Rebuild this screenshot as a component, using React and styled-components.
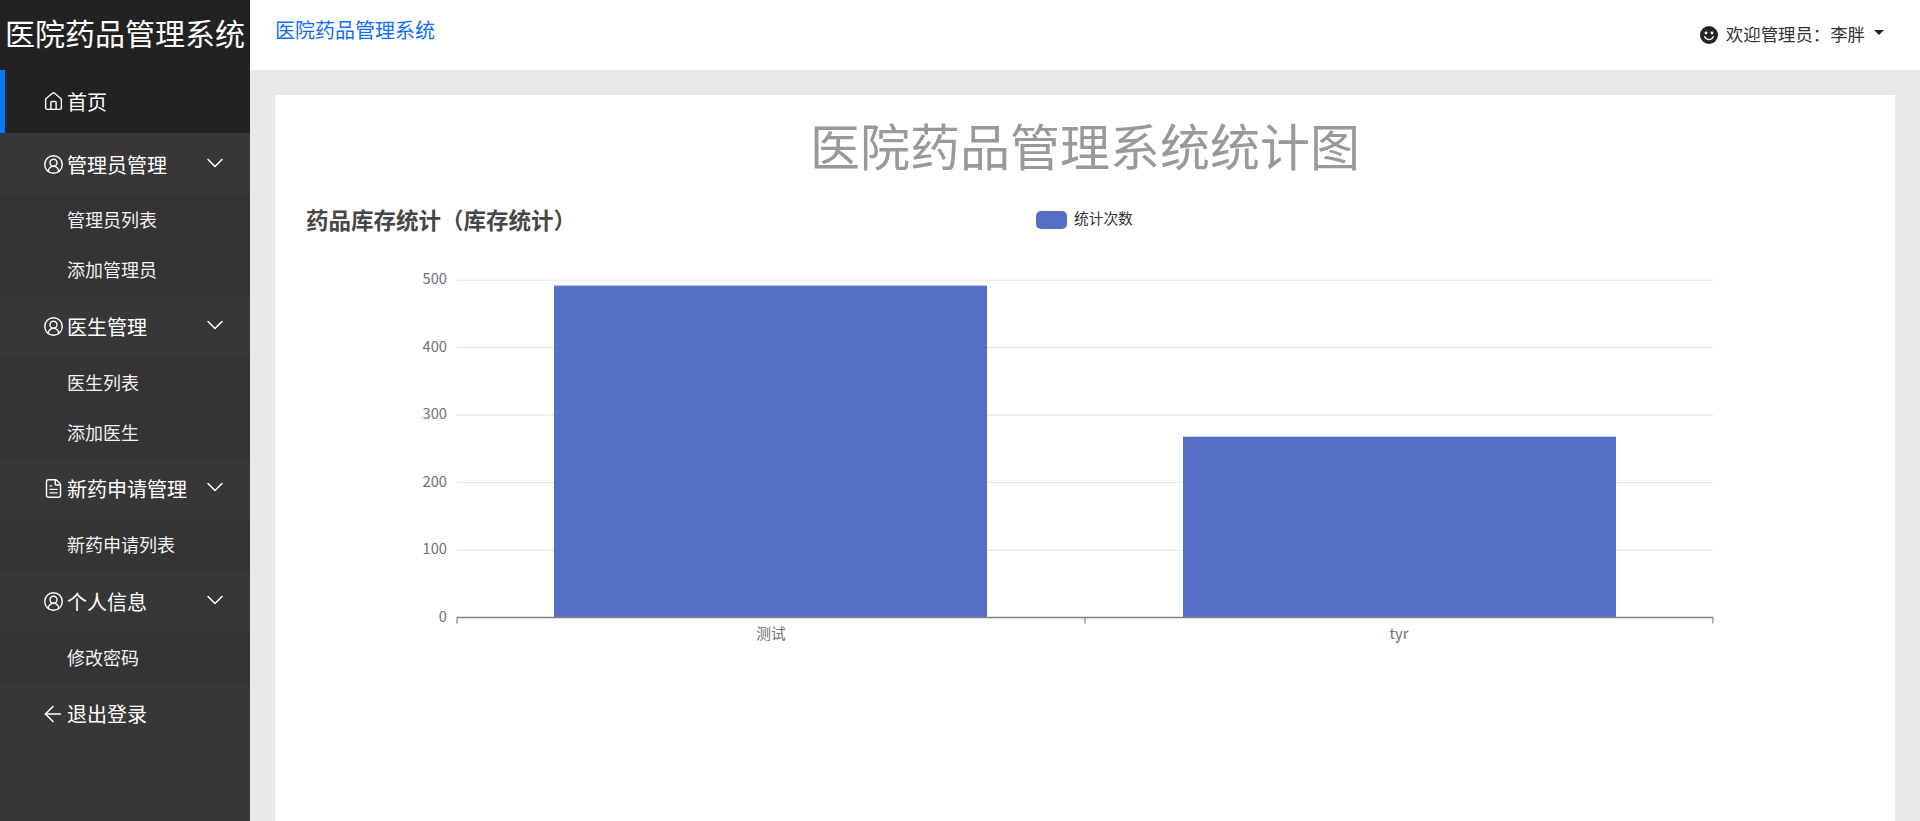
import React from "react";
import styled, { createGlobalStyle } from "styled-components";
import { House, CircleUserRound, FileText, ArrowLeft, ChevronDown } from "lucide-react";

const FONT = `"Noto Sans CJK SC", "Noto Sans", sans-serif`;

const GlobalStyle = createGlobalStyle`
  html, body {
    margin: 0;
    padding: 0;
    height: 100%;
    overflow: hidden;
    font-family: ${FONT};
    background: #e9e9e9;
  }
  #root { height: 100%; }
  * { box-sizing: border-box; }
`;

const Page = styled.div`
  display: flex;
  height: 821px;
  width: 1920px;
`;

const Sidebar = styled.aside`
  width: 250px;
  flex: none;
  background: #373737;
  color: #fff;
  display: flex;
  flex-direction: column;
`;

const Logo = styled.div`
  height: 70px;
  background: #222;
  font-size: 30px;
  line-height: 64px;
  text-align: center;
  white-space: nowrap;
`;

const NavHead = styled.div`
  height: ${(p) => p.$height || 62.4}px;
  display: flex;
  align-items: center;
  padding-left: ${(p) => (p.$active ? 38 : 43)}px;
  padding-right: 21px;
  font-size: 20px;
  background: ${(p) => (p.$active ? "#222" : "transparent")};
  border-left: ${(p) => (p.$active ? "5px solid #007bff" : "none")};
`;

const NavIcon = styled.span`
  width: 20px;
  height: 20px;
  margin-right: 4px;
  display: flex;
  align-items: center;
  justify-content: center;
  flex: none;
  svg { flex: none; }
`;

const NavLabel = styled.span`
  flex: 1;
  white-space: nowrap;
`;

const Chevron = styled(ChevronDown)`
  flex: none;
  margin-top: -3px;
`;

const SubList = styled.div`
  background: #343434;
`;

const SubItem = styled.div`
  height: 50px;
  line-height: 48px;
  padding-left: 67px;
  font-size: 18px;
  color: #f2f2f2;
`;

const Main = styled.div`
  flex: 1;
  min-width: 0;
  display: flex;
  flex-direction: column;
`;

const TopBar = styled.header`
  height: 70px;
  flex: none;
  background: #fff;
  display: flex;
  justify-content: space-between;
  padding: 0 36px 0 25px;
`;

const BrandLink = styled.a`
  color: #0d6efd;
  font-size: 20px;
  line-height: 60px;
`;

const UserMenu = styled.div`
  display: flex;
  align-items: center;
  gap: 8px;
  color: #333;
  font-size: 17.4px;
  margin-top: -4px;
`;

const SmileyWrap = styled.span`
  display: flex;
  margin-top: 4px;
`;

const Caret = styled.span`
  display: inline-block;
  margin-left: 1px;
  margin-bottom: 2px;
  border-top: 5px solid #212529;
  border-left: 5px solid transparent;
  border-right: 5px solid transparent;
`;

const Content = styled.main`
  flex: 1;
  padding: 25px 25px 0;
  min-height: 0;
`;

const Card = styled.section`
  background: #fff;
  height: 100%;
  position: relative;
`;

const PageTitle = styled.h1`
  margin: 0;
  padding-top: 14px;
  height: 78px;
  font-size: 50px;
  font-weight: 400;
  line-height: 70px;
  text-align: center;
  color: #999;
`;

const ChartTitle = styled.h2`
  position: absolute;
  left: 31px;
  top: 107px;
  margin: 0;
  font-size: 22.5px;
  font-weight: 700;
  line-height: 34px;
  color: #464646;
`;

const ChartSvg = styled.svg`
  display: block;
  position: absolute;
  left: 0;
  top: 0;
`;

const AxisText = styled.text`
  font-family: ${FONT};
  font-size: 14.7px;
  fill: #6e7079;
`;

const LegendText = styled.text`
  font-family: ${FONT};
  font-size: 14.7px;
  fill: #333;
`;

function Smiley() {
  return (
    <svg width="18" height="18" viewBox="0 0 18 18">
      <circle cx="9" cy="9" r="9" fill="#212529" />
      <circle cx="6" cy="7" r="1.4" fill="#fff" />
      <circle cx="12" cy="7" r="1.4" fill="#fff" />
      <path d="M4.6 10.6c.8 2 2.4 3 4.4 3s3.6-1 4.4-3" fill="none" stroke="#fff" strokeWidth="1.3" strokeLinecap="round" />
    </svg>
  );
}

// chart geometry is in page px, card starts at 275,95
const X0 = 457 - 275;
const X1 = 1713 - 275;
const XMID = 1085 - 275;
const Y0 = 617.5 - 95;
const PER = 0.6746;

function Chart() {
  const ticks = [0, 100, 200, 300, 400, 500];
  return (
    <ChartSvg width="1620" height="726" viewBox="0 0 1620 726">
      <rect x={1036 - 275} y={211 - 95} width="31" height="18" rx="5" fill="#5470c6" />
      <LegendText x={1074 - 275} y={224 - 95}>统计次数</LegendText>
      {ticks.slice(1).map((t) => (
        <line key={t} x1={X0} x2={X1} y1={Y0 - t * PER} y2={Y0 - t * PER} stroke="#e6e6e6" strokeWidth="1.2" />
      ))}
      {ticks.map((t) => (
        <AxisText key={t} x={X0 - 10} y={Y0 - t * PER + 4} textAnchor="end">{t}</AxisText>
      ))}
      <rect x={554 - 275} y={Y0 - 492 * PER} width={433} height={492 * PER} fill="#5470c6" />
      <rect x={1183 - 275} y={Y0 - 268 * PER} width={433} height={268 * PER} fill="#5470c6" />
      <line x1={X0} x2={X1} y1={Y0} y2={Y0} stroke="#808080" strokeWidth="1.5" />
      {[X0, XMID, X1].map((x) => (
        <line key={x} x1={x} x2={x} y1={Y0} y2={Y0 + 6} stroke="#808080" strokeWidth="1.2" />
      ))}
      <AxisText x={(X0 + XMID) / 2} y={Y0 + 21} textAnchor="middle">测试</AxisText>
      <AxisText x={(XMID + X1) / 2} y={Y0 + 21} textAnchor="middle">tyr</AxisText>
    </ChartSvg>
  );
}

const menu = [
  { label: "管理员管理", icon: CircleUserRound, items: ["管理员列表", "添加管理员"] },
  { label: "医生管理", icon: CircleUserRound, items: ["医生列表", "添加医生"] },
  { label: "新药申请管理", icon: FileText, items: ["新药申请列表"] },
  { label: "个人信息", icon: CircleUserRound, items: ["修改密码"] },
];

export default function App() {
  return (
    <Page>
      <GlobalStyle />
      <Sidebar>
        <Logo>医院药品管理系统</Logo>
        <NavHead $active $height={63}>
          <NavIcon><House size={21} strokeWidth={1.6} /></NavIcon>
          <NavLabel>首页</NavLabel>
        </NavHead>
        {menu.map((group) => (
          <div key={group.label}>
            <NavHead>
              <NavIcon><group.icon size={21} strokeWidth={1.6} /></NavIcon>
              <NavLabel>{group.label}</NavLabel>
              <Chevron size={28} strokeWidth={1.3} />
            </NavHead>
            <SubList>
              {group.items.map((item) => (
                <SubItem key={item}>{item}</SubItem>
              ))}
            </SubList>
          </div>
        ))}
        <NavHead>
          <NavIcon><ArrowLeft size={26} strokeWidth={1.4} /></NavIcon>
          <NavLabel>退出登录</NavLabel>
        </NavHead>
      </Sidebar>
      <Main>
        <TopBar>
          <BrandLink>医院药品管理系统</BrandLink>
          <UserMenu>
            <SmileyWrap><Smiley /></SmileyWrap>
            <span>欢迎管理员：李胖</span>
            <Caret />
          </UserMenu>
        </TopBar>
        <Content>
          <Card>
            <PageTitle>医院药品管理系统统计图</PageTitle>
            <Chart />
            <ChartTitle>药品库存统计（库存统计）</ChartTitle>
          </Card>
        </Content>
      </Main>
    </Page>
  );
}
